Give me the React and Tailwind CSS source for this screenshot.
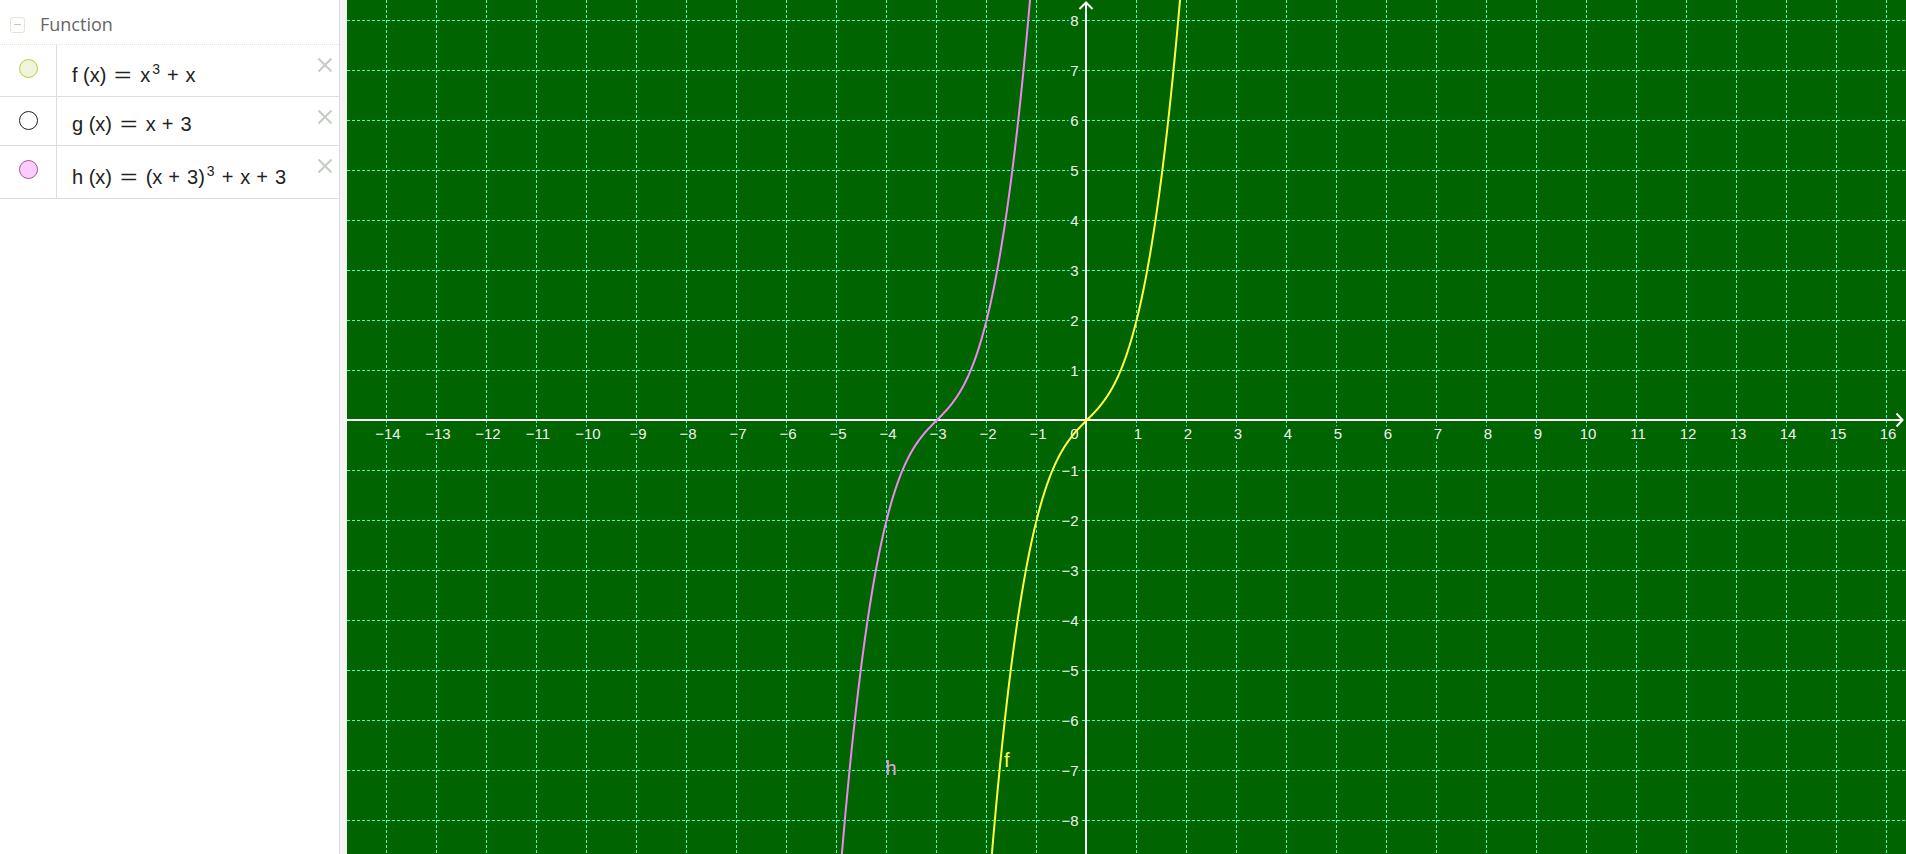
import React from 'react';

// graph geometry, in px inside the svg (svg starts at page x = 347)
const OX = 739.5;
const OY = 420.5;
const U = 50;
const W = 1559;
const H = 854;
const GRID = '#40ffc0';
const BG = '#006400';
const LABEL_FONT = "'Liberation Sans', Arial, sans-serif";

const curve = (fn, a, b, n = 600) => {
  let d = '';
  for (let i = 0; i <= n; i++) {
    const x = a + ((b - a) * i) / n;
    const y = fn(x);
    d += (i ? 'L' : 'M') + (OX + U * x).toFixed(2) + ' ' + (OY - U * y).toFixed(2);
  }
  return d;
};

const fPath = curve((x) => x * x * x + x, -2.2, 2.2);
const hPath = curve((x) => Math.pow(x + 3, 3) + x + 3, -5.2, -0.8);

const xs = [];
for (let k = -14; k <= 16; k++) xs.push(k);
const ys = [];
for (let k = -8; k <= 8; k++) ys.push(k);

const label = (n) => (n < 0 ? '\u2212' + Math.abs(n) : String(n));

const Sup = ({ children }) => (
  <span className="relative -top-[8px] ml-[2px] mr-[1px] text-[14px]">{children}</span>
);

const Eq = () => (
  <span className="mx-[11px] inline-block scale-x-150 leading-[0]">=</span>
);
const Plus = () => <span className="ml-[6px] mr-[7px]">+</span>;

const Close = () => (
  <svg width="16" height="16" viewBox="0 0 16 16">
    <path d="M1.5 1.5L14.5 14.5M14.5 1.5L1.5 14.5" stroke="#c3ccc3" strokeWidth="2" fill="none" />
  </svg>
);

const Row = ({ h, textPad, dot, children }) => (
  <div className={`flex border-b border-[#dedede] ${h}`}>
    <div className="flex w-[57px] shrink-0 justify-center border-r border-[#dedede] pt-[14px]">
      <span className={`block h-[19px] w-[19px] rounded-full border ${dot}`} />
    </div>
    <div className={`flex-1 whitespace-nowrap pl-[15px] text-[20px] leading-[24px] text-[#222] font-['Liberation_Sans',sans-serif] ${textPad}`}>
      {children}
    </div>
    <div className="pr-[6px] pt-[12px]">
      <Close />
    </div>
  </div>
);

const Tick = ({ x, y, anchor, children }) => (
  <text
    x={x}
    y={y}
    textAnchor={anchor}
    fill="#f2f2f2"
    stroke={BG}
    strokeWidth="5"
    strokeLinejoin="round"
    paintOrder="stroke"
    fontSize="15"
    fontFamily={LABEL_FONT}
  >
    {children}
  </text>
);

const Graph = () => (
  <svg width={W} height={H} viewBox={`0 0 ${W} ${H}`} className="absolute inset-0 block">
    {xs.map((k) =>
      k === 0 ? null : (
        <line key={'v' + k} x1={OX + U * k} y1="0" x2={OX + U * k} y2={H} stroke={GRID} strokeWidth="1" strokeDasharray="3 2" />
      )
    )}
    {ys.map((k) =>
      k === 0 ? null : (
        <line key={'h' + k} x1="0" y1={OY - U * k} x2={W} y2={OY - U * k} stroke={GRID} strokeWidth="1" strokeDasharray="3 2" />
      )
    )}

    {/* axes */}
    <line x1="0" y1={OY - 0.5} x2={1556} y2={OY - 0.5} stroke="#fff" strokeWidth="2" />
    <line x1={OX - 0.5} y1="2" x2={OX - 0.5} y2={H} stroke="#fff" strokeWidth="2" />
    <path d={`M${OX - 7} 9L${OX - 0.5} 2.5L${OX + 6} 9`} stroke="#fff" strokeWidth="2" fill="none" />
    <path d={`M1549.5 ${OY - 7}L1555.5 ${OY - 0.5}L1549.5 ${OY + 6}`} stroke="#fff" strokeWidth="2" fill="none" />

    {xs.map((k) =>
      k === 0 ? (
        <Tick key="xl0" x={OX - 8} y="439" anchor="end">0</Tick>
      ) : (
        <Tick key={'xl' + k} x={OX + U * k + 1.5} y="439" anchor="middle">{label(k)}</Tick>
      )
    )}
    {ys.map((k) =>
      k === 0 ? null : (
        <Tick key={'yl' + k} x={OX - 8} y={OY - U * k + 5} anchor="end">{label(k)}</Tick>
      )
    )}

    {/* curves */}
    <path d={hPath} stroke="#ee88ee" strokeWidth="2" fill="none" />
    <path d={fPath} stroke="#ffff40" strokeWidth="2" fill="none" />

    <text x="538.5" y="775" fill="#e8a0e8" fontSize="20" fontFamily={LABEL_FONT}>h</text>
    <text x="657" y="767" fill="#ffff55" fontSize="20" fontFamily={LABEL_FONT}>f</text>
  </svg>
);

export default function App() {
  return (
    <div className="flex h-screen w-full overflow-hidden bg-white">
      <aside className="w-[340px] shrink-0 border-r border-[#dcdcdc] bg-white">
        <div className="flex h-[45px] items-center border-b border-dotted border-[#e4e9cf] pt-[5px]">
          <span className="ml-[10px] flex h-[16px] w-[15px] items-center justify-center rounded-[3px] border border-[#e3e8d6]">
            <span className="block h-[1.5px] w-[7px] bg-[#c4c4c4]" />
          </span>
          <span className="ml-[15px] text-[18px] text-[#666] font-['Open_Sans',sans-serif]">Function</span>
        </div>

        <Row h="h-[52px]" textPad="pt-[18px]" dot="border-[#b2cf3c] bg-[#f1f4dd]">
          f (x)
          <Eq />
          x<Sup>3</Sup>
          <Plus />x
        </Row>
        <Row h="h-[49px]" textPad="pt-[15px]" dot="border-[#222] bg-white">
          g (x)
          <Eq />
          x<Plus />3
        </Row>
        <Row h="h-[53px]" textPad="pt-[19px]" dot="border-[#9a5a9a] bg-[#ffccff]">
          h (x)
          <Eq />
          (x<Plus />3)<Sup>3</Sup>
          <Plus />x<Plus />3
        </Row>
      </aside>
      <div className="w-[7px] shrink-0 bg-[#f4f4f4]" />
      <div className="relative flex-1 bg-[#006400]">
        <Graph />
      </div>
    </div>
  );
}
